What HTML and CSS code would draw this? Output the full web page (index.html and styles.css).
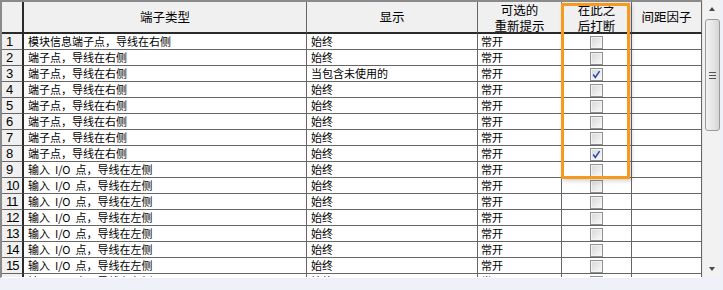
FILE: index.html
```html
<!DOCTYPE html>
<html lang="zh-CN">
<head>
<meta charset="utf-8">
<link rel="stylesheet" href="styles.css">
</head>
<body>
<div class="frame">
  <div class="view">
    <table class="grid">
      <colgroup>
        <col class="c0"><col class="c1"><col class="c2"><col class="c3"><col class="c4"><col class="c5">
      </colgroup>
      <thead>
        <tr>
          <th class="corner"><div class="hd"></div></th>
          <th><div class="hd">端子类型</div></th>
          <th><div class="hd">显示</div></th>
          <th><div class="hd two">可选的<br>重新提示</div></th>
          <th><div class="hd two">在此之<br>后打断</div></th>
          <th><div class="hd">间距因子</div></th>
        </tr>
      </thead>
      <tbody>
        <tr><td class="rh">1</td><td>模块信息端子点，导线在右侧</td><td>始终</td><td class="t3">常开</td><td class="ck"><span class="cb"></span></td><td></td></tr>
        <tr><td class="rh">2</td><td>端子点，导线在右侧</td><td>始终</td><td class="t3">常开</td><td class="ck"><span class="cb"></span></td><td></td></tr>
        <tr><td class="rh">3</td><td>端子点，导线在右侧</td><td>当包含未使用的</td><td class="t3">常开</td><td class="ck"><span class="cb"><svg viewBox="0 0 13 13" width="13" height="13"><path d="M3.2 6.6 L5.3 9.4 L9.6 3.1" fill="none" stroke="#2b48a8" stroke-width="1.6"/></svg></span></td><td></td></tr>
        <tr><td class="rh">4</td><td>端子点，导线在右侧</td><td>始终</td><td class="t3">常开</td><td class="ck"><span class="cb"></span></td><td></td></tr>
        <tr><td class="rh">5</td><td>端子点，导线在右侧</td><td>始终</td><td class="t3">常开</td><td class="ck"><span class="cb"></span></td><td></td></tr>
        <tr><td class="rh">6</td><td>端子点，导线在右侧</td><td>始终</td><td class="t3">常开</td><td class="ck"><span class="cb"></span></td><td></td></tr>
        <tr><td class="rh">7</td><td>端子点，导线在右侧</td><td>始终</td><td class="t3">常开</td><td class="ck"><span class="cb"></span></td><td></td></tr>
        <tr><td class="rh">8</td><td>端子点，导线在右侧</td><td>始终</td><td class="t3">常开</td><td class="ck"><span class="cb"><svg viewBox="0 0 13 13" width="13" height="13"><path d="M3.2 6.6 L5.3 9.4 L9.6 3.1" fill="none" stroke="#2b48a8" stroke-width="1.6"/></svg></span></td><td></td></tr>
        <tr><td class="rh">9</td><td>输入&nbsp; I/O&nbsp; 点，导线在左侧</td><td>始终</td><td class="t3">常开</td><td class="ck"><span class="cb"></span></td><td></td></tr>
        <tr><td class="rh">10</td><td>输入&nbsp; I/O&nbsp; 点，导线在左侧</td><td>始终</td><td class="t3">常开</td><td class="ck"><span class="cb"></span></td><td></td></tr>
        <tr><td class="rh">11</td><td>输入&nbsp; I/O&nbsp; 点，导线在左侧</td><td>始终</td><td class="t3">常开</td><td class="ck"><span class="cb"></span></td><td></td></tr>
        <tr><td class="rh">12</td><td>输入&nbsp; I/O&nbsp; 点，导线在左侧</td><td>始终</td><td class="t3">常开</td><td class="ck"><span class="cb"></span></td><td></td></tr>
        <tr><td class="rh">13</td><td>输入&nbsp; I/O&nbsp; 点，导线在左侧</td><td>始终</td><td class="t3">常开</td><td class="ck"><span class="cb"></span></td><td></td></tr>
        <tr><td class="rh">14</td><td>输入&nbsp; I/O&nbsp; 点，导线在左侧</td><td>始终</td><td class="t3">常开</td><td class="ck"><span class="cb"></span></td><td></td></tr>
        <tr><td class="rh">15</td><td>输入&nbsp; I/O&nbsp; 点，导线在左侧</td><td>始终</td><td class="t3">常开</td><td class="ck"><span class="cb"></span></td><td></td></tr>
        <tr><td class="rh">16</td><td>输入&nbsp; I/O&nbsp; 点，导线在左侧</td><td>始终</td><td class="t3">常开</td><td class="ck"><span class="cb"></span></td><td></td></tr>
      </tbody>
    </table>
    <div class="highlight"></div>
  </div>
  <div class="scrollbar">
    <div class="arrow up"></div>
    <div class="thumb"><span class="grip"></span></div>
    <div class="track"></div>
    <div class="arrow down"></div>
  </div>
</div>
</body>
</html>
```
FILE: styles.css
```css
html, body {
  margin: 0;
  padding: 0;
  background: #eef2f8;
}
.frame {
  display: flex;
  width: 723px;
  height: 278px;
}
.view {
  position: relative;
  width: 700px;
  height: 275px;
  overflow: hidden;
  border-top: 2px solid #8a8a8a;
  border-left: 2px solid #8a8a8a;
  border-bottom: 1px solid #ffffff;
  background: #ffffff;
}
.grid {
  table-layout: fixed;
  border-collapse: separate;
  border-spacing: 0;
  width: 700px;
  font-family: "Noto Sans CJK SC", "Liberation Sans", sans-serif;
  font-size: 11px;
  color: #000;
}
.c0 { width: 22px; }
.c1 { width: 283px; }
.c2 { width: 171px; }
.c3 { width: 84px; }
.c4 { width: 70px; }
.c5 { width: 70px; }
.grid th, .grid td {
  box-sizing: border-box;
  padding: 0;
  border-right: 1px solid #666666;
  border-bottom: 1px solid #666666;
  white-space: nowrap;
  overflow: hidden;
}
.grid th {
  height: 32px;
  background: #f0f0f0;
  font-weight: normal;
  font-size: 12.5px;
  text-align: center;
  vertical-align: top;
  border-bottom: 2px solid #2a2a2a;
  overflow: visible;
}
.hd {
  box-sizing: border-box;
  height: 30px;
  line-height: 16px;
  padding-top: 7px;
}
.hd.two {
  padding-top: 0;
  overflow: visible;
}
.grid th.corner {
  border-right: 2px solid #2a2a2a;
}
.grid td {
  height: 16px;
  line-height: 15px;
  padding-left: 4px;
  vertical-align: middle;
  background: #fff;
}
.grid td.rh {
  background: #f0f0f0;
  border-right: 2px solid #2a2a2a;
  font-family: "Liberation Sans", Arial, sans-serif;
  font-size: 13px;
  letter-spacing: -1px;
  padding-left: 4px;
}
.grid td.t3 {
  padding-left: 3px;
}
.grid td.ck {
  padding-left: 0;
  text-align: center;
}
.cb {
  display: inline-block;
  box-sizing: border-box;
  width: 13px;
  height: 13px;
  vertical-align: middle;
  margin-top: -1px;
  border: 1px solid #8f9090;
  background: linear-gradient(135deg, #d6d6d6 0%, #ececec 60%, #fafafa 100%);
  box-shadow: inset 0 0 0 1px #f4f4f4;
  position: relative;
}
.cb svg {
  position: absolute;
  left: -1px;
  top: -1px;
}
.highlight {
  position: absolute;
  left: 559px;
  top: 1px;
  width: 63px;
  height: 170px;
  border: 3px solid #f7981f;
  box-shadow: 2px 2px 4px rgba(0,0,0,0.18);
  pointer-events: none;
}
.scrollbar {
  width: 18px;
  height: 278px;
  display: flex;
  flex-direction: column;
  align-items: center;
  background: #f2f2f2;
  border-left: 1px solid #e6e6e6;
}
.arrow {
  height: 18px;
  width: 100%;
  position: relative;
}
.arrow::after {
  content: "";
  position: absolute;
  left: 6px;
  width: 0;
  height: 0;
  border-left: 3.5px solid transparent;
  border-right: 3.5px solid transparent;
}
.arrow.up::after {
  top: 7px;
  border-bottom: 4px solid #4a4a4a;
}
.arrow.down::after {
  top: 7px;
  border-top: 4px solid #4a4a4a;
}
.thumb {
  box-sizing: border-box;
  width: 15px;
  height: 112px;
  margin-top: 1px;
  border: 1px solid #9a9a9a;
  border-radius: 3px;
  background: linear-gradient(90deg, #f2f2f2 0%, #e6e6e6 50%, #d6d6d6 100%);
  display: flex;
  align-items: center;
  justify-content: center;
}
.grip {
  display: block;
  width: 7px;
  height: 5px;
  border-top: 1px solid #555;
  border-bottom: 1px solid #555;
  position: relative;
}
.grip::after {
  content: "";
  position: absolute;
  left: 0;
  right: 0;
  top: 2px;
  border-top: 1px solid #555;
}
.track {
  flex: 1;
}
```
